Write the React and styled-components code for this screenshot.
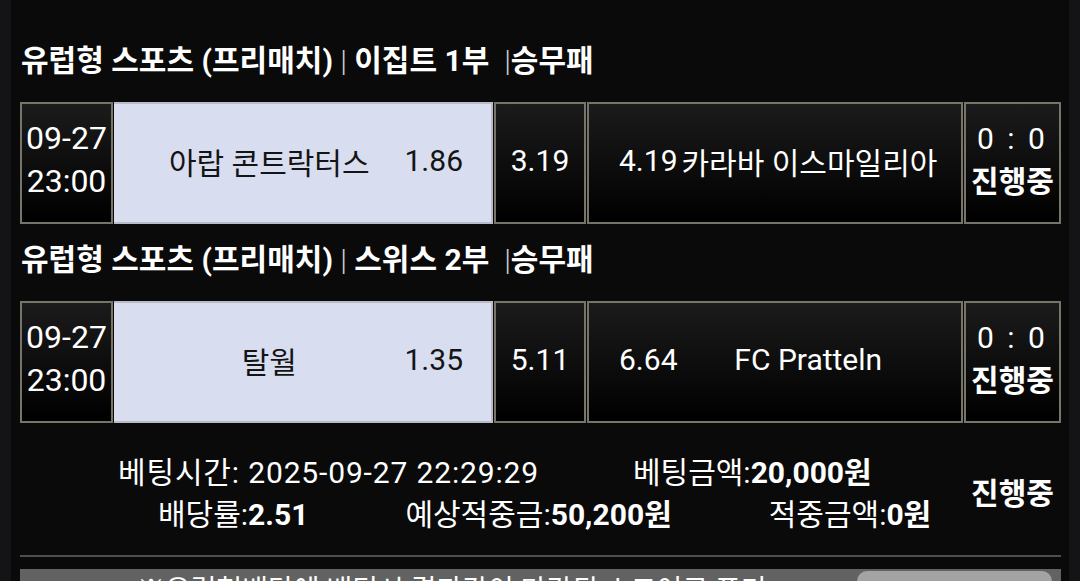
import React from "react";
import styled, { createGlobalStyle } from "styled-components";

const Global = createGlobalStyle`
  html, body { margin: 0; padding: 0; background: #141417; overflow: hidden; }
  body { font-family: Roboto, "Noto Sans CJK KR", sans-serif; color: #fff; }
`;

const Panel = styled.div`
  margin: 0 11px;
  min-height: 581px;
  background: #0a0a0a;
  padding: 41px 8px 0 9px;
  box-sizing: border-box;
`;

const Section = styled.section`
  display: flex;
  flex-direction: column;
  gap: 21px;
  & + & { margin-top: 16px; }
`;

const Title = styled.h2`
  margin: 0;
  height: 40px;
  line-height: 40px;
  font-size: 30px;
  font-weight: 700;
  white-space: pre;
  color: #fff;
  padding-left: 1px;
`;

const Pipe = styled.span`
  font-weight: 300;
  color: #cfcfcf;
`;

const Row = styled.div`
  display: grid;
  grid-template-columns: 93px 379px 92px 376px 97px;
  column-gap: 1px;
  height: 122px;
  font-size: 30px;
`;

const Cell = styled.div`
  box-sizing: border-box;
  border: 2px solid #77756a;
  background: linear-gradient(180deg, #1b1b1b 0%, #000 100%);
  display: flex;
  align-items: center;
  justify-content: center;
  color: #fff;
  padding-bottom: 5px;
`;

const Stack = styled(Cell)`
  flex-direction: column;
  line-height: 43px;
  padding-bottom: 7px;
  font-size: ${(p) => (p.$large ? "32px" : "30px")};
`;

const StackLine = styled.div`
  font-weight: ${(p) => (p.$bold ? 700 : 400)};
  font-size: ${(p) => (p.$bold ? "30px" : "inherit")};
  letter-spacing: ${(p) => (p.$wide ? "3px" : "0")};
  white-space: pre;
`;

const Home = styled.div`
  box-sizing: border-box;
  background: #d9ddf0;
  border: 2px solid #b9bbc6;
  border-left: none;
  color: #141414;
  display: flex;
  align-items: center;
  gap: 20px;
  padding: 0 28px 5px 40px;
`;

const Away = styled(Cell)`
  justify-content: flex-start;
  gap: 4px;
  padding: 0 26px 5px 30px;
`;

const Name = styled.span`
  flex: 1;
  text-align: center;
  white-space: nowrap;
`;

const Odd = styled.span`
  white-space: nowrap;
`;

const Summary = styled.div`
  display: grid;
  grid-template-columns: 1fr 97px;
  margin-top: 26px;
  font-size: 30px;
`;

const Lines = styled.div`
  display: flex;
  flex-direction: column;
`;

const Line = styled.div`
  display: flex;
  gap: ${(p) => p.$gap}px;
  height: 42px;
  align-items: center;
  padding-left: ${(p) => p.$indent}px;
  white-space: pre;
`;

const Stamp = styled.span`
  letter-spacing: 0.85px;
`;

const B = styled.b`
  font-weight: 700;
`;

const Status = styled.div`
  display: flex;
  align-items: center;
  justify-content: center;
  font-weight: 700;
  font-size: 30px;
`;

const Divider = styled.hr`
  margin: 22px 0 0;
  border: none;
  height: 2px;
  background: #4e4e50;
`;

const Notice = styled.div`
  margin-top: 12px;
  background: #626262;
  height: 60px;
  display: flex;
  align-items: flex-start;
  padding-left: 117px;
  font-size: 28px;
  line-height: 44px;
  color: #fff;
  white-space: nowrap;
`;

const NoticeButton = styled.div`
  margin-left: auto;
  margin-right: 9px;
  margin-top: 2px;
  width: 195px;
  height: 50px;
  border-radius: 10px;
  background: #a3a3a3;
  flex-shrink: 0;
`;

const matches = [
  {
    league: "이집트 1부",
    home: "아랍 콘트락터스",
    homeOdd: "1.86",
    draw: "3.19",
    awayOdd: "4.19",
    away: "카라바 이스마일리아",
  },
  {
    league: "스위스 2부",
    home: "탈월",
    homeOdd: "1.35",
    draw: "5.11",
    awayOdd: "6.64",
    away: "FC Pratteln",
  },
];

function Match({ m }) {
  return (
    <Section>
      <Title>
        유럽형 스포츠 (프리매치)<Pipe> | </Pipe>
        {m.league}
        {"  "}
        <Pipe>|</Pipe>승무패
      </Title>
      <Row>
        <Stack $large>
          <StackLine>09-27</StackLine>
          <StackLine>23:00</StackLine>
        </Stack>
        <Home>
          <Name>{m.home}</Name>
          <Odd>{m.homeOdd}</Odd>
        </Home>
        <Cell>{m.draw}</Cell>
        <Away>
          <Odd>{m.awayOdd}</Odd>
          <Name>{m.away}</Name>
        </Away>
        <Stack>
          <StackLine $wide>0 : 0</StackLine>
          <StackLine $bold>진행중</StackLine>
        </Stack>
      </Row>
    </Section>
  );
}

export default function App() {
  return (
    <>
      <Global />
      <Panel>
        {matches.map((m, i) => (
          <Match key={i} m={m} />
        ))}
        <Summary>
          <Lines>
            <Line $indent={98} $gap={94}>
              <Stamp>베팅시간: 2025-09-27 22:29:29</Stamp>
              <span>
                베팅금액:<B>20,000원</B>
              </span>
            </Line>
            <Line $indent={138} $gap={97}>
              <span>
                배당률:<B>2.51</B>
              </span>
              <span>
                예상적중금:<B>50,200원</B>
              </span>
              <span>
                적중금액:<B>0원</B>
              </span>
            </Line>
          </Lines>
          <Status>진행중</Status>
        </Summary>
        <Divider />
        <Notice>
          <span>※유럽형배당에 배팅시 결과값이 마감된 스코어로 표기</span>
          <NoticeButton />
        </Notice>
      </Panel>
    </>
  );
}
